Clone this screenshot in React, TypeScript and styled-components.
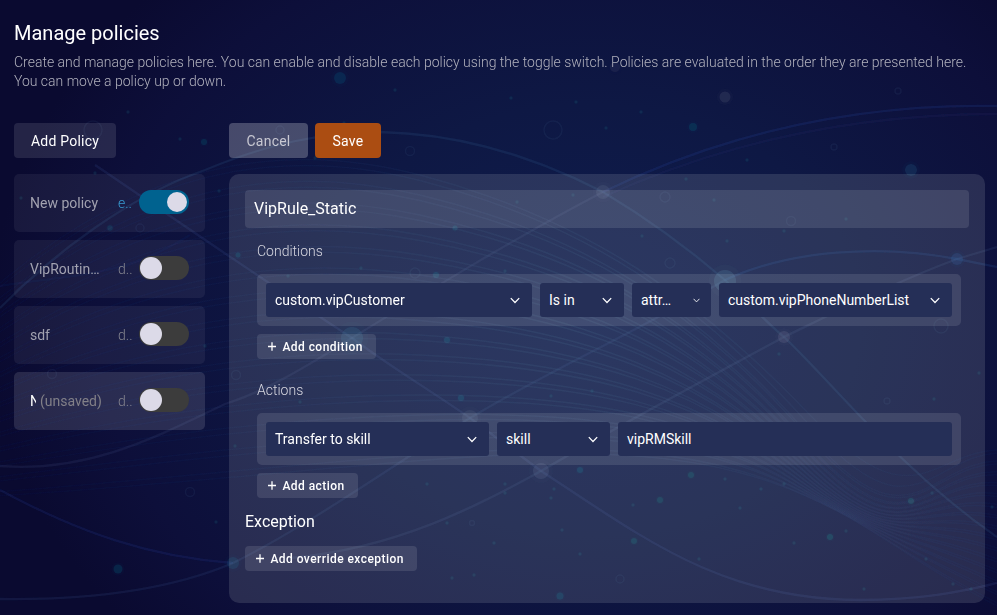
import React, { useState } from "react";
import styled, { createGlobalStyle } from "styled-components";

const GlobalStyle = createGlobalStyle`
  * { box-sizing: border-box; }
  body {
    margin: 0;
    font-family: Roboto, "Liberation Sans", sans-serif;
    background: #0a0a30;
    color: #fff;
    overflow: hidden;
  }
  button, input { font: inherit; color: inherit; border: 0; outline: 0; margin: 0; letter-spacing: inherit; }
`;

const Page = styled.div`
  position: relative;
  width: 997px;
  height: 615px;
  overflow: hidden;
  background: radial-gradient(ellipse 600px 480px at 590px 320px, #0f1d4e 0%, #0e1844 45%, #0d0f3a 82%, #0a0a30 100%);
`;

const Backdrop = styled.svg`
  position: absolute;
  inset: 0;
  width: 997px;
  height: 615px;
`;

const Content = styled.main`
  position: relative;
  height: 100%;
  padding: 21px 12px 12px 14px;
  display: flex;
  flex-direction: column;
`;

const Title = styled.h1`
  margin: 0;
  font-size: 20px;
  line-height: 24px;
  font-weight: 400;
`;

const Description = styled.p`
  margin: 8px 0 32px;
  font-size: 14px;
  line-height: 19px;
  font-weight: 300;
  letter-spacing: -0.006px;
  color: #b1b1bd;
`;

const Columns = styled.div`
  display: grid;
  grid-template-columns: 191px 756px;
  column-gap: 24px;
  row-gap: 16px;
`;

const ButtonBar = styled.div`
  display: flex;
  gap: 7px;
`;

const Button = styled.button<{ $tone: "plain" | "muted" | "primary"; $width: number }>`
  width: ${(p) => p.$width}px;
  height: 35px;
  padding: 0;
  border-radius: 4px;
  font-size: 14px;
  letter-spacing: 0.23px;
  background: ${(p) =>
    ({ plain: "rgba(255,255,255,0.11)", muted: "rgba(255,255,255,0.24)", primary: "#ab4d12" })[p.$tone]};
  color: ${(p) => (p.$tone === "muted" ? "#c8c8d2" : "#fff")};
`;

const PolicyList = styled.div`
  display: flex;
  flex-direction: column;
  gap: 8px;
`;

const PolicyCard = styled.div<{ $selected?: boolean }>`
  display: flex;
  align-items: center;
  height: 58px;
  padding: 0 16px;
  border-radius: 5px;
  background: rgba(255, 255, 255, ${(p) => (p.$selected ? 0.12 : 0.06)});
  font-size: 14px;
  color: #a2a2b0;
`;

const PolicyName = styled.div<{ $clip?: boolean }>`
  width: ${(p) => (p.$clip ? 6 : 72)}px;
  overflow: hidden;
  white-space: nowrap;
  text-overflow: ${(p) => (p.$clip ? "clip" : "ellipsis")};
  color: ${(p) => (p.$clip ? "#fff" : "inherit")};
`;

const Unsaved = styled.div`
  width: 66px;
  padding-left: 4px;
  white-space: nowrap;
  color: #828088;
`;

const PolicyState = styled.div<{ $on?: boolean }>`
  width: 21px;
  margin-left: 16px;
  font-weight: 300;
  color: ${(p) => (p.$on ? "#389bd0" : "#85858f")};
`;

const Toggle = styled.button<{ $on?: boolean }>`
  display: flex;
  align-items: center;
  justify-content: ${(p) => (p.$on ? "flex-end" : "flex-start")};
  flex: none;
  width: 50px;
  height: 24px;
  margin-top: -2px;
  padding: 0 ${(p) => (p.$on ? 2 : 1)}px;
  border-radius: 12px;
  background: ${(p) => (p.$on ? "#00628f" : "#3c3c3c")};
  &::before {
    content: "";
    width: ${(p) => (p.$on ? 20 : 22)}px;
    height: ${(p) => (p.$on ? 20 : 22)}px;
    border-radius: 50%;
    background: #dcdae8;
  }
`;

const Editor = styled.section`
  height: 429px;
  padding: 16px;
  border-radius: 10px;
  background: rgba(248, 251, 250, 0.122);
  display: flex;
  flex-direction: column;
`;

const NameInput = styled.input`
  height: 38px;
  padding: 0 9px 2px;
  border-radius: 4px;
  background: rgba(255, 255, 255, 0.11);
  font-size: 16px;
`;

const Group = styled.div<{ $last?: boolean }>`
  padding: 0 8px 0 12px;
  margin: ${(p) => (p.$last ? "0 0 14px" : "13px 0 21px")};
  display: flex;
  flex-direction: column;
  align-items: flex-start;
`;

const GroupLabel = styled.div`
  height: 20px;
  margin-bottom: 13px;
  font-size: 14px;
  line-height: 20px;
  font-weight: 300;
  color: #d7d7e0;
`;

const FieldRow = styled.div`
  display: flex;
  gap: 8px;
  width: 704px;
  height: 52px;
  padding: 9px;
  margin-bottom: 8px;
  border-radius: 5px;
  background: rgba(255, 255, 255, 0.11);
`;

const Field = styled.div<{ $width: number }>`
  display: flex;
  align-items: center;
  justify-content: space-between;
  width: ${(p) => p.$width}px;
  height: 34px;
  padding: 0 9px;
  border-radius: 3px;
  background: #252f57;
  font-size: 14px;
  white-space: nowrap;
`;

const ChevronIcon = styled.svg<{ $small?: boolean }>`
  width: ${(p) => (p.$small ? 7 : 10)}px;
  height: ${(p) => (p.$small ? 5 : 7)}px;
  margin-right: ${(p) => (p.$small ? 2 : 3)}px;
`;

const AddButton = styled.button<{ $width: number }>`
  display: flex;
  align-items: center;
  gap: 6.4px;
  width: ${(p) => p.$width}px;
  height: 25px;
  padding: 0 0 0 11px;
  border-radius: 4px;
  background: rgba(255, 255, 255, 0.11);
  font-size: 12px;
  font-weight: 500;
  letter-spacing: 0.45px;
  white-space: nowrap;
`;

const SectionTitle = styled.h2`
  height: 20px;
  margin: 0 0 14px;
  font-size: 16px;
  line-height: 20px;
  font-weight: 400;
`;

const Chevron = ({ small }: { small?: boolean }) => (
  <ChevronIcon $small={small} viewBox="0 0 10 7" fill="none">
    <path d="M0.8 1.1 5 5.5 9.2 1.1" stroke="#fff" strokeWidth="1.25" />
  </ChevronIcon>
);

const Add = ({ width, children }: { width: number; children: React.ReactNode }) => (
  <AddButton $width={width}>
    <svg width="8" height="9" viewBox="0 0 8 9">
      <path d="M4 0.2V8.8M-0.3 4.5H8.3" stroke="#fff" strokeWidth="1.3" />
    </svg>
    {children}
  </AddButton>
);

const Select = ({ width, small, children }: { width: number; small?: boolean; children: React.ReactNode }) => (
  <Field $width={width}>
    <span>{children}</span>
    <Chevron small={small} />
  </Field>
);

const waves = Array.from({ length: 30 }, (_, i) => {
  const t = (i + (i % 2) * -0.45) / 29;
  return `M-20 ${300 + 200 * t} C 110 ${185 + 310 * t} 250 ${130 + 350 * t} 420 ${175 + 290 * t} S 700 ${
    300 + 155 * t
  } ${810 - 20 * t} ${415 + 75 * Math.sqrt(t)} S ${930 - 30 * t} ${445 + 115 * t} 1010 ${450 + 165 * t}`;
});

const strands: [string, string, number][] = [
  ["M0 308C55 252 130 196 205 170C270 143 320 133 380 132C470 134 545 162 603 192C650 220 690 250 725 280C750 304 766 322 784 337C830 380 900 470 997 537", "#3a6f9f", 0.28],
  ["M603 192C700 145 830 103 997 106", "#2b3f92", 0.42],
  ["M603 197C700 153 830 114 997 114", "#263779", 0.25],
  ["M725 280C790 250 880 244 957 259L997 267", "#2855a0", 0.36],
  ["M997 247L957 259C900 280 840 310 784 337C700 382 620 425 541 471C480 504 400 548 290 558", "#4a6494", 0.28],
  ["M603 192C520 235 430 290 352 338C295 374 260 393 225 404C160 435 90 473 0 466", "#43598d", 0.3],
  ["M95 165C140 195 240 265 352 338C395 370 430 390 470 418L541 471C640 535 720 600 860 600C920 600 960 592 997 583", "#405797", 0.32],
  ["M725 280C640 330 550 370 470 418C400 460 310 525 233 563C165 592 80 600 0 599", "#35558d", 0.32],
  ["M0 490C80 533 150 557 233 563", "#203a8c", 0.4],
  ["M0 286C60 275 120 280 190 235", "#203078", 0.22],
];

const nodes: [number, number, number, string, number][] = [
  [603, 192, 7, "#7a86a5", 0.22], [725, 281, 11, "#4b86a6", 0.36],
  [784, 337, 6, "#54567f", 0.5], [352, 338, 11, "#267293", 0.33],
  [470, 418, 8, "#6a7794", 0.24], [541, 471, 8, "#59668f", 0.36],
  [957, 259, 6, "#1c559a", 0.4], [233, 563, 6, "#1e8eaa", 0.22],
  [340, 78, 6, "#0e6087", 0.38], [725, 97, 5.5, "#535477", 0.45],
  [615, 67, 5, "#565777", 0.28], [911, 170, 6, "#257094", 0.33],
  [693, 127, 4, "#19748a", 0.35], [118, 569, 4.5, "#128095", 0.33],
  [204, 142, 3, "#16738b", 0.35], [110, 228, 2.7, "#16738b", 0.35],
  [560, 596, 3.5, "#167a98", 0.35], [634, 541, 3, "#18918d", 0.3],
  [660, 500, 3, "#18918d", 0.3], [691, 475, 3, "#18918d", 0.3],
  [911, 501, 3, "#18918d", 0.35], [830, 537, 3, "#18918d", 0.35],
  [461, 398, 3, "#167a98", 0.35], [447, 340, 3, "#167a98", 0.35],
  [455, 228, 2.5, "#167a98", 0.35], [436, 275, 3, "#167a98", 0.35],
  [238, 255, 2.5, "#167a98", 0.35], [580, 470, 3, "#167a98", 0.35],
];

const specks = [
  [128, 112], [180, 139], [395, 90], [511, 98], [576, 102], [641, 112], [606, 128], [747, 160],
  [315, 158], [344, 123], [21, 198], [95, 173], [219, 191], [205, 346], [216, 522], [235, 446],
  [686, 179], [714, 200], [846, 219], [784, 231], [727, 241], [642, 236], [573, 195], [517, 202],
  [361, 268], [505, 271], [288, 276], [300, 402], [592, 391], [551, 396], [779, 354], [934, 399],
  [979, 373], [505, 484], [505, 493], [551, 498], [554, 489], [447, 523], [494, 543], [562, 530],
  [580, 554], [474, 575], [452, 578], [427, 484], [725, 479], [761, 489], [740, 508], [846, 531],
  [794, 543], [633, 505], [864, 589], [926, 559], [971, 589], [953, 584], [932, 493], [992, 507], [699, 559], [784, 484],
];

const rings = [
  [93, 130, 9], [280, 130, 4], [410, 151, 4.5], [553, 130, 9], [898, 91, 3], [834, 147, 3],
  [415, 273, 5], [665, 197, 5], [791, 221, 4.5], [670, 263, 5], [941, 326, 7], [140, 228, 4],
  [52, 374, 4.5], [236, 375, 4.5], [190, 492, 4.5], [620, 579, 4], [472, 523, 2.5], [887, 401, 3],
];

const NetworkBackdrop = () => (
  <Backdrop viewBox="0 0 997 615" fill="none" aria-hidden="true">
    <defs>
      <radialGradient id="waveFade" gradientUnits="userSpaceOnUse" cx="570" cy="330" r="540">
        <stop offset="0" stopColor="#4f86a4" stopOpacity="0.12" />
        <stop offset="0.5" stopColor="#355a9a" stopOpacity="0.075" />
        <stop offset="1" stopColor="#2a3b92" stopOpacity="0.06" />
      </radialGradient>
      <filter id="soften" x="-5%" y="-5%" width="110%" height="110%">
        <feGaussianBlur stdDeviation="0.6" />
      </filter>
    </defs>
    <g filter="url(#soften)">
      {waves.map((d) => <path key={d} d={d} stroke="url(#waveFade)" strokeWidth="1.5" />)}
      {strands.map(([d, stroke, opacity]) => (
        <path key={d} d={d} stroke={stroke} strokeOpacity={opacity * 0.58} strokeWidth="2.3" />
      ))}
      {nodes.map(([x, y, r, fill, o]) => (
        <g key={`${x}-${y}`} fill={fill}>
          <circle cx={x} cy={y} r={r * 1.5} opacity={o * 0.1} />
          <circle cx={x} cy={y} r={r} opacity={o * 0.6} />
        </g>
      ))}
      {specks.map(([x, y]) => <circle key={`${x}-${y}`} cx={x} cy={y} r="1.7" fill="#1f8a94" opacity="0.16" />)}
      {rings.map(([x, y, r]) => (
        <circle key={`${x}-${y}`} cx={x} cy={y} r={r} stroke="#4f749b" strokeOpacity="0.1" strokeWidth="1.5" />
      ))}
    </g>
  </Backdrop>
);

const initialPolicies = [
  { name: "New policy", on: true },
  { name: "VipRoutingPolicy", on: false },
  { name: "sdf", on: false },
  { name: "New", on: false, unsaved: true },
];

export default function App() {
  const [policies, setPolicies] = useState(initialPolicies);
  const [name, setName] = useState("VipRule_Static");
  const flip = (index: number) =>
    setPolicies((list) => list.map((p, i) => (i === index ? { ...p, on: !p.on } : p)));

  return (
    <Page>
      <GlobalStyle />
      <NetworkBackdrop />
      <Content>
        <Title>Manage policies</Title>
        <Description>
          Create and manage policies here. You can enable and disable each policy using the toggle switch. Policies are
          evaluated in the order they are presented here.
          <br />
          You can move a policy up or down.
        </Description>
        <Columns>
          <ButtonBar>
            <Button $tone="plain" $width={102}>Add Policy</Button>
          </ButtonBar>
          <ButtonBar>
            <Button $tone="muted" $width={79}>Cancel</Button>
            <Button $tone="primary" $width={66}>Save</Button>
          </ButtonBar>
          <PolicyList>
            {policies.map((p, i) => (
              <PolicyCard key={p.name} $selected={p.unsaved}>
                <PolicyName $clip={p.unsaved}>{p.name}</PolicyName>
                {p.unsaved && <Unsaved>(unsaved)</Unsaved>}
                <PolicyState $on={p.on}>{p.on ? "e.." : "d.."}</PolicyState>
                <Toggle $on={p.on} aria-label={`Toggle ${p.name}`} onClick={() => flip(i)} />
              </PolicyCard>
            ))}
          </PolicyList>
          <Editor>
            <NameInput value={name} onChange={(e) => setName(e.target.value)} />
            <Group>
              <GroupLabel>Conditions</GroupLabel>
              <FieldRow>
                <Select width={266}>custom.vipCustomer</Select>
                <Select width={84}>Is in</Select>
                <Select width={79} small>attr…</Select>
                <Select width={233}>custom.vipPhoneNumberList</Select>
              </FieldRow>
              <Add width={119}>Add condition</Add>
            </Group>
            <Group $last>
              <GroupLabel>Actions</GroupLabel>
              <FieldRow>
                <Select width={223}>Transfer to skill</Select>
                <Select width={113}>skill</Select>
                <Field $width={334}>vipRMSkill</Field>
              </FieldRow>
              <Add width={101}>Add action</Add>
            </Group>
            <SectionTitle>Exception</SectionTitle>
            <Add width={172}>Add override exception</Add>
          </Editor>
        </Columns>
      </Content>
    </Page>
  );
}
